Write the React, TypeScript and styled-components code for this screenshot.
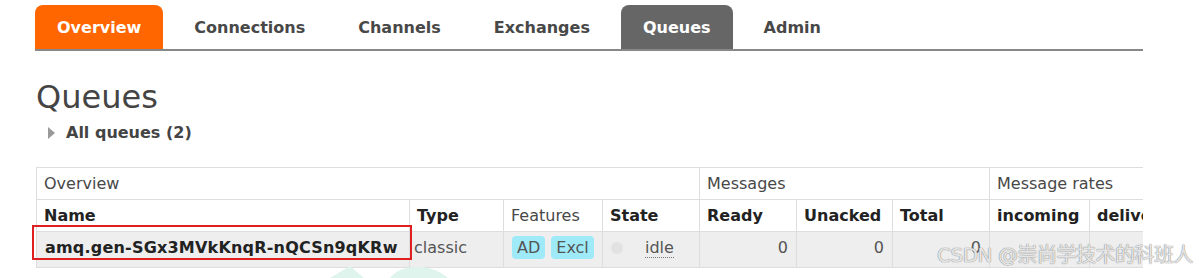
import React from 'react';
import styled, { createGlobalStyle } from 'styled-components';

const GlobalStyle = createGlobalStyle`
  html, body {
    margin: 0;
    padding: 0;
    background: #fff;
    font-family: "DejaVu Sans", Verdana, sans-serif;
    color: #484848;
  }
`;

const Page = styled.div`
  position: relative;
  width: 1204px;
  height: 278px;
  overflow: hidden;
`;

const Frame = styled.div`
  box-sizing: border-box;
  width: 1143px;
  padding-left: 35px;
  overflow: hidden;
`;

const TabBar = styled.ul`
  display: flex;
  gap: 9px;
  margin: 5px 0 0;
  padding: 0;
  list-style: none;
  border-bottom: 2px solid #888;
`;

const Tab = styled.li<{ $bg?: string }>`
  height: 44px;
  padding: 0 22px;
  display: flex;
  align-items: center;
  border-radius: 8px 8px 0 0;
  background: ${(p) => p.$bg || 'transparent'};
  color: ${(p) => (p.$bg ? '#fff' : '#484848')};
  font-size: 16px;
  font-weight: bold;
`;

const Title = styled.h1`
  margin: 27px 0 0 1px;
  font-size: 32px;
  font-weight: normal;
  line-height: 38px;
  color: #444;
`;

const Toggle = styled.div`
  display: flex;
  align-items: center;
  gap: 11px;
  margin: 7px 0 0 13px;
  font-size: 16px;
  font-weight: bold;
  color: #444;
`;

const Arrow = styled.span`
  width: 0;
  height: 0;
  border-top: 6px solid transparent;
  border-bottom: 6px solid transparent;
  border-left: 7px solid #999;
`;

const Table = styled.table`
  margin-top: 25px;
  margin-left: 1px;
  width: 1180px;
  table-layout: fixed;
  border-collapse: collapse;
  font-size: 16px;
`;

const Row = styled.tr<{ $h: number; $bg?: string }>`
  height: ${(p) => p.$h}px;
  background: ${(p) => p.$bg || '#fff'};
`;

const GroupCell = styled.th`
  padding: 0 7px;
  text-align: left;
  font-weight: normal;
  color: #484848;
  border: 1px solid #ddd;
`;

const HeadCell = styled.th<{ $light?: boolean }>`
  padding: 0 7px;
  text-align: left;
  font-weight: ${(p) => (p.$light ? 'normal' : 'bold')};
  color: ${(p) => (p.$light ? '#484848' : '#222')};
  border: 1px solid #ddd;
  white-space: nowrap;
  overflow: hidden;
`;

const Cell = styled.td<{ $right?: boolean; $bold?: boolean }>`
  position: relative;
  padding: 0 8px 4px;
  text-align: ${(p) => (p.$right ? 'right' : 'left')};
  font-weight: ${(p) => (p.$bold ? 'bold' : 'normal')};
  color: ${(p) => (p.$bold ? '#222' : '#555')};
  letter-spacing: ${(p) => (p.$bold ? '0.2px' : 'normal')};
  border: 1px solid #ddd;
  white-space: nowrap;
`;

const Highlight = styled.div`
  position: absolute;
  left: -5px;
  right: -3px;
  top: -7px;
  height: 31px;
  border: 2px solid #e02020;
  pointer-events: none;
`;

const Badge = styled.span`
  display: inline-block;
  padding: 2px 5px;
  margin-right: 6px;
  border-radius: 4px;
  background: #9eeaf9;
  color: #555;
`;

const StateWrap = styled.span`
  display: inline-flex;
  align-items: center;
  gap: 22px;
`;

const Dot = styled.span`
  width: 12px;
  height: 12px;
  border-radius: 50%;
  background: #e2e2e2;
`;

const Idle = styled.span`
  border-bottom: 1px dotted #777;
`;

const Watermark = styled.div`
  position: absolute;
  left: 937px;
  top: 239px;
  font-size: 20px;
  font-family: "DejaVu Sans", "Noto Sans CJK SC", sans-serif;
  color: rgba(255, 255, 255, 0.8);
  text-shadow: 0 0 1px #888, 0 0 1px #888;
  letter-spacing: -0.5px;
`;

const Logo = styled.svg`
  position: absolute;
  left: 320px;
  top: 266px;
`;

export default function App() {
  const tabs = ['Overview', 'Connections', 'Channels', 'Exchanges', 'Queues', 'Admin'];
  const bgs: Record<string, string> = { Overview: '#ff6600', Queues: '#666' };

  return (
    <Page>
      <GlobalStyle />
      <Frame>
        <TabBar>
          {tabs.map((t) => (
            <Tab key={t} $bg={bgs[t]}>{t}</Tab>
          ))}
        </TabBar>
        <Title>Queues</Title>
        <Toggle>
          <Arrow />
          All queues (2)
        </Toggle>
        <Table>
          <colgroup>
            <col style={{ width: 373 }} />
            <col style={{ width: 94 }} />
            <col style={{ width: 99 }} />
            <col style={{ width: 97 }} />
            <col style={{ width: 97 }} />
            <col style={{ width: 96 }} />
            <col style={{ width: 97 }} />
            <col style={{ width: 100 }} />
            <col style={{ width: 127 }} />
          </colgroup>
          <thead>
            <Row $h={32}>
              <GroupCell colSpan={4}>Overview</GroupCell>
              <GroupCell colSpan={3}>Messages</GroupCell>
              <GroupCell colSpan={2}>Message rates</GroupCell>
            </Row>
            <Row $h={32}>
              <HeadCell>Name</HeadCell>
              <HeadCell>Type</HeadCell>
              <HeadCell $light>Features</HeadCell>
              <HeadCell>State</HeadCell>
              <HeadCell>Ready</HeadCell>
              <HeadCell>Unacked</HeadCell>
              <HeadCell>Total</HeadCell>
              <HeadCell>incoming</HeadCell>
              <HeadCell>deliver / get</HeadCell>
            </Row>
          </thead>
          <tbody>
            <Row $h={36} $bg="#eeeeee">
              <Cell $bold>
                amq.gen-SGx3MVkKnqR-nQCSn9qKRw
                <Highlight />
              </Cell>
              <Cell style={{ paddingLeft: 4 }}>classic</Cell>
              <Cell>
                <Badge>AD</Badge>
                <Badge>Excl</Badge>
              </Cell>
              <Cell>
                <StateWrap>
                  <Dot />
                  <Idle>idle</Idle>
                </StateWrap>
              </Cell>
              <Cell $right>0</Cell>
              <Cell $right>0</Cell>
              <Cell $right>0</Cell>
              <Cell />
              <Cell />
            </Row>
          </tbody>
        </Table>
      </Frame>
      <Logo width="140" height="12" viewBox="0 0 140 12">
        <path d="M10 12 L30 0 L44 12 Z" fill="#dff4ec" />
        <path d="M70 12 C80 -2 110 -4 128 12 Z" fill="#dff4ec" />
      </Logo>
      <Watermark>CSDN @崇尚学技术的科班人</Watermark>
    </Page>
  );
}
